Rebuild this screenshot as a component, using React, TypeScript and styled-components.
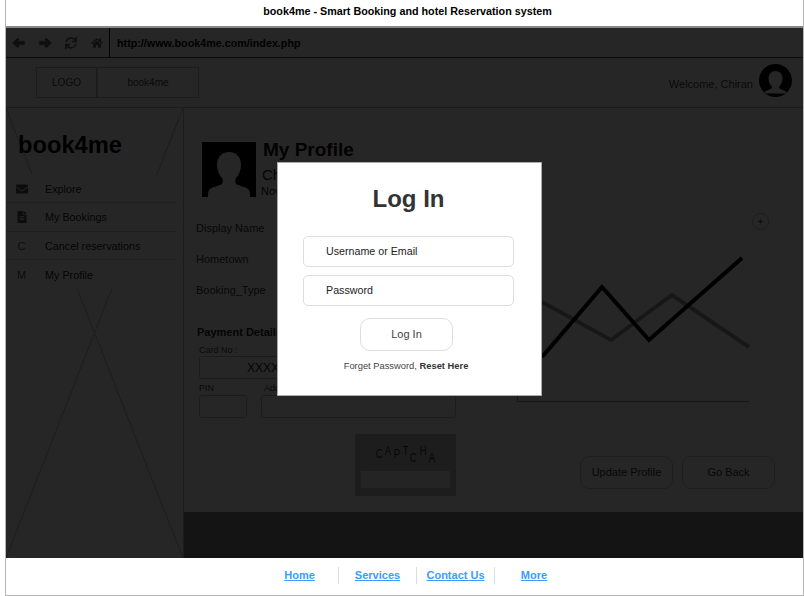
import React from "react"
import styled, { createGlobalStyle } from "styled-components"
import { FaSync, FaHome, FaEnvelope, FaFileAlt } from "react-icons/fa"

const Global = createGlobalStyle`
	html, body {
		margin: 0;
		padding: 0;
		background: #fff;
		height: 100%;
		overflow: hidden;
	}
	* { box-sizing: border-box; }
`

const menu = [
	{ icon: <FaEnvelope size={12} />, label: "Explore" },
	{ icon: <FaFileAlt size={12} />, label: "My Bookings" },
	{ icon: "C", label: "Cancel reservations" },
	{ icon: "M", label: "My Profile" },
]
const captcha: [string, number][] = [["C", 3], ["A", 0], ["P", 3], ["T", 0], ["C", 7], ["H", 0], ["A", 7]]
const links = ["Home", "Services", "Contact Us", "More"]

function Arrow({ flip }: { flip?: boolean }) {
	return (
		<ArrowSvg viewBox="0 0 14 14" $flip={flip}>
			<path d="M0.500 7L6 1.500 8 3.500 6.500 5H13.500V9H6.500L8 10.500 6 12.500Z" />
		</ArrowSvg>
	)
}

function Silhouette() {
	return (
		<AvatarSvg viewBox="0 0 54 55">
			<path fill="#fff" d="M27 10c-8 0-12 6-12 13 0 5 2 10 5 13 1 2 1 4 0 6-3 2-11 3-13 6-1 2-1 5-1 7h42c0-2 0-5-1-7-2-3-10-4-13-6-1-2-1-4 0-6 3-3 5-8 5-13 0-7-4-13-12-13z" />
		</AvatarSvg>
	)
}

export default function App() {
	return <>
		<Global />
		<Frame>
			<TitleBar>book4me - Smart Booking and hotel Reservation system</TitleBar>
			<Stage>
				<BrowserBar>
					<NavIcons>
						<Arrow />
						<Arrow flip />
						<FaSync size={12} />
						<FaHome size={12} />
					</NavIcons>
					<Url>http://www.book4me.com/index.php</Url>
				</BrowserBar>
				<Header>
					<LogoGroup>
						<LogoCell $w={61}>LOGO</LogoCell>
						<LogoCell $w={102}>book4me</LogoCell>
					</LogoGroup>
					<Welcome>Welcome, Chiran</Welcome>
					<RoundAvatar>
						<svg viewBox="0 0 33 33" width="33" height="33">
							<path fill="#fff" d="M16.500 7c-4.500 0-7 3.500-7 7.500 0 3 1.200 5.700 3 7.500.5 1 .4 2-.4 2.800-1.800 1-5.100 1.700-6.600 3.200L5 29.500 28 29.500 27.500 28c-1.500-1.500-4.800-2.200-6.600-3.200-.8-.8-.9-1.800-.4-2.800 1.800-1.800 3-4.500 3-7.500 0-4-2.500-7.500-7-7.500z" />
						</svg>
					</RoundAvatar>
				</Header>
				<Body>
					<Sidebar>
						<SideCross viewBox="0 0 177 450" preserveAspectRatio="none">
							<line x1="0" y1="0" x2="177" y2="450" />
							<line x1="177" y1="0" x2="0" y2="450" />
						</SideCross>
						<Brand>book4me</Brand>
						<Menu>
							{menu.map(m => (
								<MenuRow key={m.label}>
									<MenuIcon>{m.icon}</MenuIcon>
									<span>{m.label}</span>
								</MenuRow>
							))}
						</Menu>
					</Sidebar>
					<Content>
						<Main>
							<LeftCol>
								<ProfileHead>
									<Silhouette />
									<ProfileText>
										<ProfileTitle>My Profile</ProfileTitle>
										<ProfileName>Chiran</ProfileName>
										<ProfileNote>Nov 2014</ProfileNote>
									</ProfileText>
								</ProfileHead>
								<Fields>
									<FieldLabel>Display Name</FieldLabel>
									<FieldLabel>Hometown</FieldLabel>
									<FieldLabel>Booking_Type</FieldLabel>
								</Fields>
								<Payment>
									<PaymentTitle>Payment Details</PaymentTitle>
									<CardLabel>Card No :</CardLabel>
									<CardInput>XXXX</CardInput>
									<PayRow>
										<PayCell $w={48}>
											<SmallLabel>PIN</SmallLabel>
											<GhostInput />
										</PayCell>
										<PayCell $w={195}>
											<SmallLabel $indent={3}>Address</SmallLabel>
											<GhostInput />
										</PayCell>
									</PayRow>
								</Payment>
								<Captcha>
									<CaptchaText>
										{captcha.map(([c, dy], i) => <CaptchaLetter key={i} $dy={dy}>{c}</CaptchaLetter>)}
									</CaptchaText>
									<CaptchaInput />
								</Captcha>
							</LeftCol>
							<RightCol>
								<PlusButton>+</PlusButton>
								<Chart viewBox="0 0 240 165" width="240" height="165">
									<path d="M0.500 155V161.500H232" fill="none" stroke="#999" strokeWidth="1" />
									<polyline points="25,62 94,100 155,55 232,107" fill="none" stroke="#999" strokeWidth="4" />
									<polyline points="25,117 85,47 132,100 225,18" fill="none" stroke="#000" strokeWidth="4" />
								</Chart>
								<Actions>
									<ActionButton>Update Profile</ActionButton>
									<ActionButton>Go Back</ActionButton>
								</Actions>
							</RightCol>
						</Main>
						<BottomBand />
					</Content>
				</Body>
				<Overlay>
					<Modal>
						<ModalTitle>Log In</ModalTitle>
						<LoginInput>Username or Email</LoginInput>
						<LoginInput>Password</LoginInput>
						<LoginButton>Log In</LoginButton>
						<Forgot>Forget Password, <b>Reset Here</b></Forgot>
					</Modal>
				</Overlay>
			</Stage>
			<Footer>
				{links.map(l => <FooterCell key={l}><FooterLink href="#">{l}</FooterLink></FooterCell>)}
			</Footer>
		</Frame>
	</>
}

const Frame = styled("div")`
	margin-left: 5px;
	width: 799px;
	height: 596px;
	display: flex;
	flex-direction: column;
	border-left: 1px solid #b5b5b5;
	border-right: 1px solid #b5b5b5;
	border-bottom: 1px solid #b5b5b5;
	font-family: "Liberation Sans", Arial, sans-serif;
	color: #333;
	overflow: hidden;
`
const TitleBar = styled("div")`
	height: 28px;
	flex: none;
	padding: 0 0 4px 6px;
	display: flex;
	align-items: center;
	justify-content: center;
	font-size: 10.750px;
	font-weight: bold;
	color: #000;
	background: #fff;
	border-bottom: 2px solid #888;
`
const Stage = styled("div")`
	position: relative;
	flex: 1;
	min-height: 0;
	display: flex;
	flex-direction: column;
	background: #fff;
`
const BrowserBar = styled("div")`
	height: 30px;
	flex: none;
	display: flex;
	border-bottom: 1px solid #444;
`
const NavIcons = styled("div")`
	width: 104px;
	flex: none;
	display: flex;
	align-items: center;
	gap: 13.500px;
	padding-left: 6px;
	color: #666;
	border-right: 1px solid #000;
`
const ArrowSvg = styled("svg")<{ $flip?: boolean }>`
	width: 13px;
	height: 14px;
	fill: currentColor;
	stroke: currentColor;
	stroke-width: 0.5;
	stroke-linejoin: round;
	transform: ${p => p.$flip ? "scaleX(-1)" : "none"};
`
const Url = styled("div")`
	padding-left: 7px;
	display: flex;
	align-items: center;
	font-size: 10.750px;
	font-weight: bold;
	color: #000;
`
const Header = styled("div")`
	height: 50px;
	flex: none;
	display: flex;
	align-items: center;
	padding: 0 11px 0 30px;
	border-bottom: 1px solid #bbb;
`
const LogoGroup = styled("div")`
	display: flex;
	margin-right: auto;
`
const LogoCell = styled("div")`
	width: ${(p: { $w: number }) => p.$w}px;
	height: 31px;
	display: flex;
	align-items: center;
	justify-content: center;
	font-size: 10px;
	color: #444;
	border: 1px solid #bbb;
`
const Welcome = styled("div")`
	font-size: 11px;
	color: #444;
	margin: 2px 6px 0 0;
`
const RoundAvatar = styled("div")`
	width: 33px;
	height: 33px;
	margin-bottom: 4px;
	border-radius: 50%;
	overflow: hidden;
	background: #000;
	line-height: 0;
`
const Body = styled("div")`
	flex: 1;
	min-height: 0;
	display: flex;
`
const Sidebar = styled("aside")`
	position: relative;
	width: 178px;
	flex: none;
	border-right: 1px solid #bbb;
`
const SideCross = styled("svg")`
	position: absolute;
	inset: 0;
	width: 100%;
	height: 100%;
	line {
		stroke: #bbb;
		stroke-width: 1;
	}
`
const Brand = styled("div")`
	position: relative;
	height: 67px;
	padding: 23px 0 0 12px;
	font-size: 23.700px;
	line-height: 28px;
	font-weight: bold;
	color: #000;
`
const Menu = styled("nav")`
	position: relative;
	background: #fff;
	margin-right: 6px;
`
const MenuRow = styled("div")`
	height: 28.450px;
	display: flex;
	align-items: center;
	font-size: 10.800px;
	color: #222;
	border-bottom: 1px solid #ccc;
	&:last-child { border-bottom: 0; }
`
const MenuIcon = styled("span")`
	width: 39px;
	padding-right: 8px;
	flex: none;
	display: flex;
	justify-content: center;
	font-size: 11px;
	color: #555;
`
const Content = styled("main")`
	flex: 1;
	min-width: 0;
	display: flex;
	flex-direction: column;
`
const Main = styled("div")`
	flex: 1;
	min-height: 0;
	display: flex;
`
const LeftCol = styled("div")`
	width: 274px;
	flex: none;
	padding: 34px 0 0 12px;
`
const ProfileHead = styled("div")`
	display: flex;
	gap: 7px;
	padding-left: 6px;
`
const AvatarSvg = styled("svg")`
	width: 54px;
	height: 55px;
	flex: none;
	background: #000;
`
const ProfileText = styled("div")`
	display: flex;
	flex-direction: column;
	color: #222;
`
const ProfileTitle = styled("div")`
	font-size: 19px;
	line-height: 16px;
	font-weight: bold;
	color: #111;
`
const ProfileName = styled("div")`
	font-size: 15px;
	line-height: 18px;
	margin: 8px 0 0 -1px;
`
const ProfileNote = styled("div")`
	font-size: 11px;
	line-height: 12px;
	margin: 1px 0 0 -2px;
`
const Fields = styled("div")`
	margin-top: 24px;
	display: flex;
	flex-direction: column;
	gap: 17px;
`
const FieldLabel = styled("div")`
	font-size: 11px;
	line-height: 14px;
	color: #333;
`
const Payment = styled("section")`
	margin-top: 28px;
	padding-left: 1px;
`
const PaymentTitle = styled("div")`
	font-size: 11px;
	line-height: 14px;
	font-weight: bold;
	color: #222;
`
const SmallLabel = styled("div")<{ $indent?: number }>`
	font-size: 9px;
	line-height: 11px;
	padding-left: ${p => p.$indent ?? 0}px;
	color: #444;
`
const CardLabel = styled(SmallLabel)`
	margin: 6px 0 0 2px;
`
const GhostInput = styled("div")`
	height: 23px;
	margin-top: 1px;
	border: 1px solid #bbb;
	border-radius: 3px;
`
const CardInput = styled(GhostInput)`
	width: 257px;
	margin: 0 0 0 2px;
	display: flex;
	align-items: center;
	padding-left: 47px;
	font-size: 12px;
	color: #222;
`
const PayRow = styled("div")`
	display: flex;
	gap: 14px;
	margin: 4px 0 0 2px;
`
const PayCell = styled("div")<{ $w: number }>`
	width: ${p => p.$w}px;
`
const Captcha = styled("div")`
	width: 101px;
	height: 62px;
	margin: 16px 0 0 159px;
	padding: 11px 6px 0;
	display: flex;
	flex-direction: column;
	background: #c4c4c4;
`
const CaptchaText = styled("div")`
	height: 26px;
	display: flex;
	justify-content: center;
	gap: 0.500px;
`
const CaptchaLetter = styled("span")<{ $dy: number }>`
	font-size: 12px;
	line-height: 12px;
	color: #333;
	transform: translateY(${p => p.$dy}px) scaleX(0.8);
`
const CaptchaInput = styled("div")`
	height: 17px;
	background: #eee;
`
const RightCol = styled("div")`
	flex: 1;
	display: flex;
	flex-direction: column;
	padding: 105px 28px 0 0;
`
const PlusButton = styled("div")`
	width: 17px;
	height: 17px;
	margin-right: 6px;
	align-self: flex-end;
	display: flex;
	align-items: center;
	justify-content: center;
	font-size: 10px;
	color: #555;
	border: 1px solid #bbb;
	border-radius: 50%;
`
const Chart = styled("svg")`
	margin: 10px 0 0 59px;
	flex: none;
`
const Actions = styled("div")`
	margin-top: 51px;
	display: flex;
	justify-content: flex-end;
	gap: 9px;
`
const ActionButton = styled("div")`
	width: 93px;
	height: 33px;
	padding-bottom: 1px;
	display: flex;
	align-items: center;
	justify-content: center;
	font-size: 11px;
	color: #333;
	border: 1px solid #c8c8c8;
	border-radius: 9px;
`
const BottomBand = styled("div")`
	height: 46px;
	flex: none;
	background: #858585;
`
const Overlay = styled("div")`
	position: absolute;
	inset: 0;
	background: rgba(0, 0, 0, 0.85);
`
const Modal = styled("div")`
	position: absolute;
	left: 271px;
	top: 134px;
	width: 265px;
	height: 234px;
	padding-right: 2px;
	display: flex;
	flex-direction: column;
	align-items: center;
	background: #fff;
	border: 1px solid #aaa;
	color: #333;
`
const ModalTitle = styled("h1")`
	margin: 22px 0 23px;
	font-size: 24px;
	line-height: 28px;
	font-weight: bold;
	color: #333;
`
const LoginInput = styled("div")`
	width: 211px;
	height: 31px;
	margin-bottom: 8px;
	padding: 0 0 2px 22px;
	display: flex;
	align-items: center;
	font-size: 10.700px;
	color: #222;
	border: 1px solid #ddd;
	border-radius: 5px;
`
const LoginButton = styled("div")`
	width: 93px;
	height: 33px;
	margin: 4px 4px 0 0;
	padding-bottom: 2px;
	display: flex;
	align-items: center;
	justify-content: center;
	font-size: 11px;
	color: #444;
	border: 1px solid #ddd;
	border-radius: 10px;
`
const Forgot = styled("div")`
	margin: 9px 5px 0 0;
	font-size: 9.350px;
	line-height: 12px;
	color: #444;
	b { color: #333; }
`
const Footer = styled("footer")`
	height: 37px;
	flex: none;
	display: flex;
	justify-content: center;
	align-items: center;
	padding: 0 0 3px 25px;
	background: #fff;
`
const FooterCell = styled("div")`
	width: 78px;
	height: 17px;
	display: flex;
	align-items: center;
	justify-content: center;
	border-right: 1px solid #ddd;
	&:last-child { border-right: 0; }
`
const FooterLink = styled("a")`
	font-size: 11px;
	font-weight: bold;
	color: #3b9cff;
`
